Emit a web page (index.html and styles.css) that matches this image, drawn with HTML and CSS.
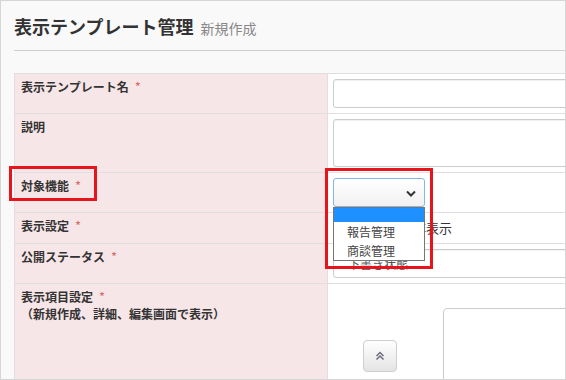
FILE: index.html
```html
<!DOCTYPE html>
<html lang="ja">
<head>
<meta charset="utf-8">
<title>表示テンプレート管理</title>
<link rel="stylesheet" href="styles.css">
</head>
<body>
<div class="frame">
  <header class="page-header">
    <h1 class="title">表示テンプレート管理<span class="subtitle">新規作成</span></h1>
  </header>
  <div class="form">
    <div class="row">
      <div class="label">表示テンプレート名<span class="req">*</span></div>
      <div class="value"><div class="input"></div></div>
    </div>
    <div class="row">
      <div class="label">説明</div>
      <div class="value"><div class="input textarea"></div></div>
    </div>
    <div class="row">
      <div class="label">対象機能<span class="req">*</span></div>
      <div class="value">
        <div class="select focus">
          <svg class="chev" width="10" height="7" viewBox="0 0 10 7"><polyline points="1,1.5 5,5.5 9,1.5" fill="none" stroke="#333" stroke-width="2"/></svg>
        </div>
      </div>
    </div>
    <div class="row">
      <div class="label">表示設定<span class="req">*</span></div>
      <div class="value radios">
        <span class="radio"></span><span class="rtext">表示</span>
        <span class="radio second"></span><span class="rtext">非表示</span>
      </div>
    </div>
    <div class="row">
      <div class="label">公開ステータス<span class="req">*</span></div>
      <div class="value"><div class="input wide">下書き状態</div></div>
    </div>
    <div class="row last">
      <div class="label">表示項目設定<span class="req">*</span><br><span class="note">（新規作成、詳細、編集画面で表示）</span></div>
      <div class="value items">
        <div class="up-btn">
          <svg width="10" height="10" viewBox="0 0 10 10"><polyline points="1.5,5 5,1.5 8.5,5" fill="none" stroke="#6d6d80" stroke-width="1.5"/><polyline points="1.5,8.5 5,5 8.5,8.5" fill="none" stroke="#6d6d80" stroke-width="1.5"/></svg>
        </div>
        <div class="item-box"></div>
      </div>
    </div>
  </div>

  <ul class="dropdown">
    <li class="opt selected"></li>
    <li class="opt">報告管理</li>
    <li class="opt">商談管理</li>
  </ul>
  <div class="mark mark-label"></div>
  <div class="mark mark-select"></div>
</div>
</body>
</html>
```
FILE: styles.css
```css
* { box-sizing: border-box; }
html, body { margin: 0; padding: 0; }
body {
  font-family: "Noto Sans CJK JP", "Noto Sans", sans-serif;
  color: #333;
  background: #fff;
}
.frame {
  position: relative;
  width: 566px;
  height: 380px;
  border: 1px solid #d6d6d6;
  background: #f9f9f9;
  overflow: hidden;
}
.page-header {
  margin-left: 13px;
  padding-top: 12px;
  padding-bottom: 9px;
  border-bottom: 1px solid #cfcfcf;
}
.title {
  margin: 0;
  font-size: 18px;
  line-height: 26px;
  font-weight: bold;
  color: #333;
}
.subtitle {
  font-size: 14px;
  font-weight: normal;
  color: #888;
  margin-left: 7px;
}
.form {
  margin-top: 22px;
  margin-left: 13px;
  width: 700px;
  border-left: 1px solid #e3dede;
}
.row {
  display: grid;
  grid-template-columns: 313px 1fr;
  border-top: 1px solid #e3dede;
}
.label {
  background: #f7e6e7;
  border-right: 1px solid #e3dede;
  padding: 4px 6px;
  font-size: 12px;
  line-height: 17px;
  font-weight: bold;
  color: #333;
}
.req {
  color: #d46a6a;
  font-weight: normal;
  font-size: 13px;
  margin-left: 6px;
}
.note { font-weight: bold; }
.value {
  background: #fff;
  padding: 5px 0 5px 5px;
}
.input {
  height: 29px;
  width: 360px;
  border: 1px solid #cccccc;
  border-radius: 3px;
  background: #fff;
  box-shadow: inset 0 1px 1px rgba(0,0,0,0.06);
  font-size: 12px;
  line-height: 27px;
  padding-left: 14px;
  color: #555;
}
.textarea { height: 48px; }
.select {
  position: relative;
  height: 29px;
  width: 92px;
  border: 1px solid #86b6e6;
  border-radius: 3px;
  background: linear-gradient(#ffffff, #f1f1f1);
}
.chev {
  position: absolute;
  right: 8px;
  top: 11px;
}
.radios {
  display: flex;
  align-items: center;
  height: 30px;
  padding-top: 4px;
  padding-bottom: 5px;
  font-size: 13px;
  color: #333;
}
.radio {
  width: 13px;
  height: 13px;
  border: 1px solid #888;
  border-radius: 50%;
  background: #fff;
  margin-right: 4px;
}
.radio.second { margin-left: 20px; }
.rtext { line-height: 20px; }
.items {
  display: flex;
  align-items: flex-start;
  height: 120px;
  padding: 0;
}
.up-btn {
  margin-top: 56px;
  margin-left: 35px;
  width: 34px;
  height: 32px;
  border: 1px solid #cfcfcf;
  border-radius: 4px;
  background: linear-gradient(#ffffff, #e4e4e4);
  display: flex;
  align-items: center;
  justify-content: center;
}
.item-box {
  margin-top: 24px;
  margin-left: 46px;
  width: 220px;
  height: 120px;
  border: 1px solid #cccccc;
  border-radius: 4px;
  background: #fff;
}
.dropdown {
  position: absolute;
  left: 332px;
  top: 206px;
  width: 92px;
  margin: 0;
  padding: 0;
  list-style: none;
  border: 1px solid #767676;
  background: #fff;
  font-size: 12px;
  color: #444;
}
.opt {
  height: 19px;
  line-height: 19px;
  padding-left: 13px;
}
.opt.selected {
  height: 14px;
  background: #1e90ff;
}
.mark {
  position: absolute;
  border: 3px solid #e8141c;
}
.mark-label {
  left: 8px;
  top: 165px;
  width: 88px;
  height: 35px;
}
.mark-select {
  left: 324px;
  top: 167px;
  width: 108px;
  height: 101px;
}
```
